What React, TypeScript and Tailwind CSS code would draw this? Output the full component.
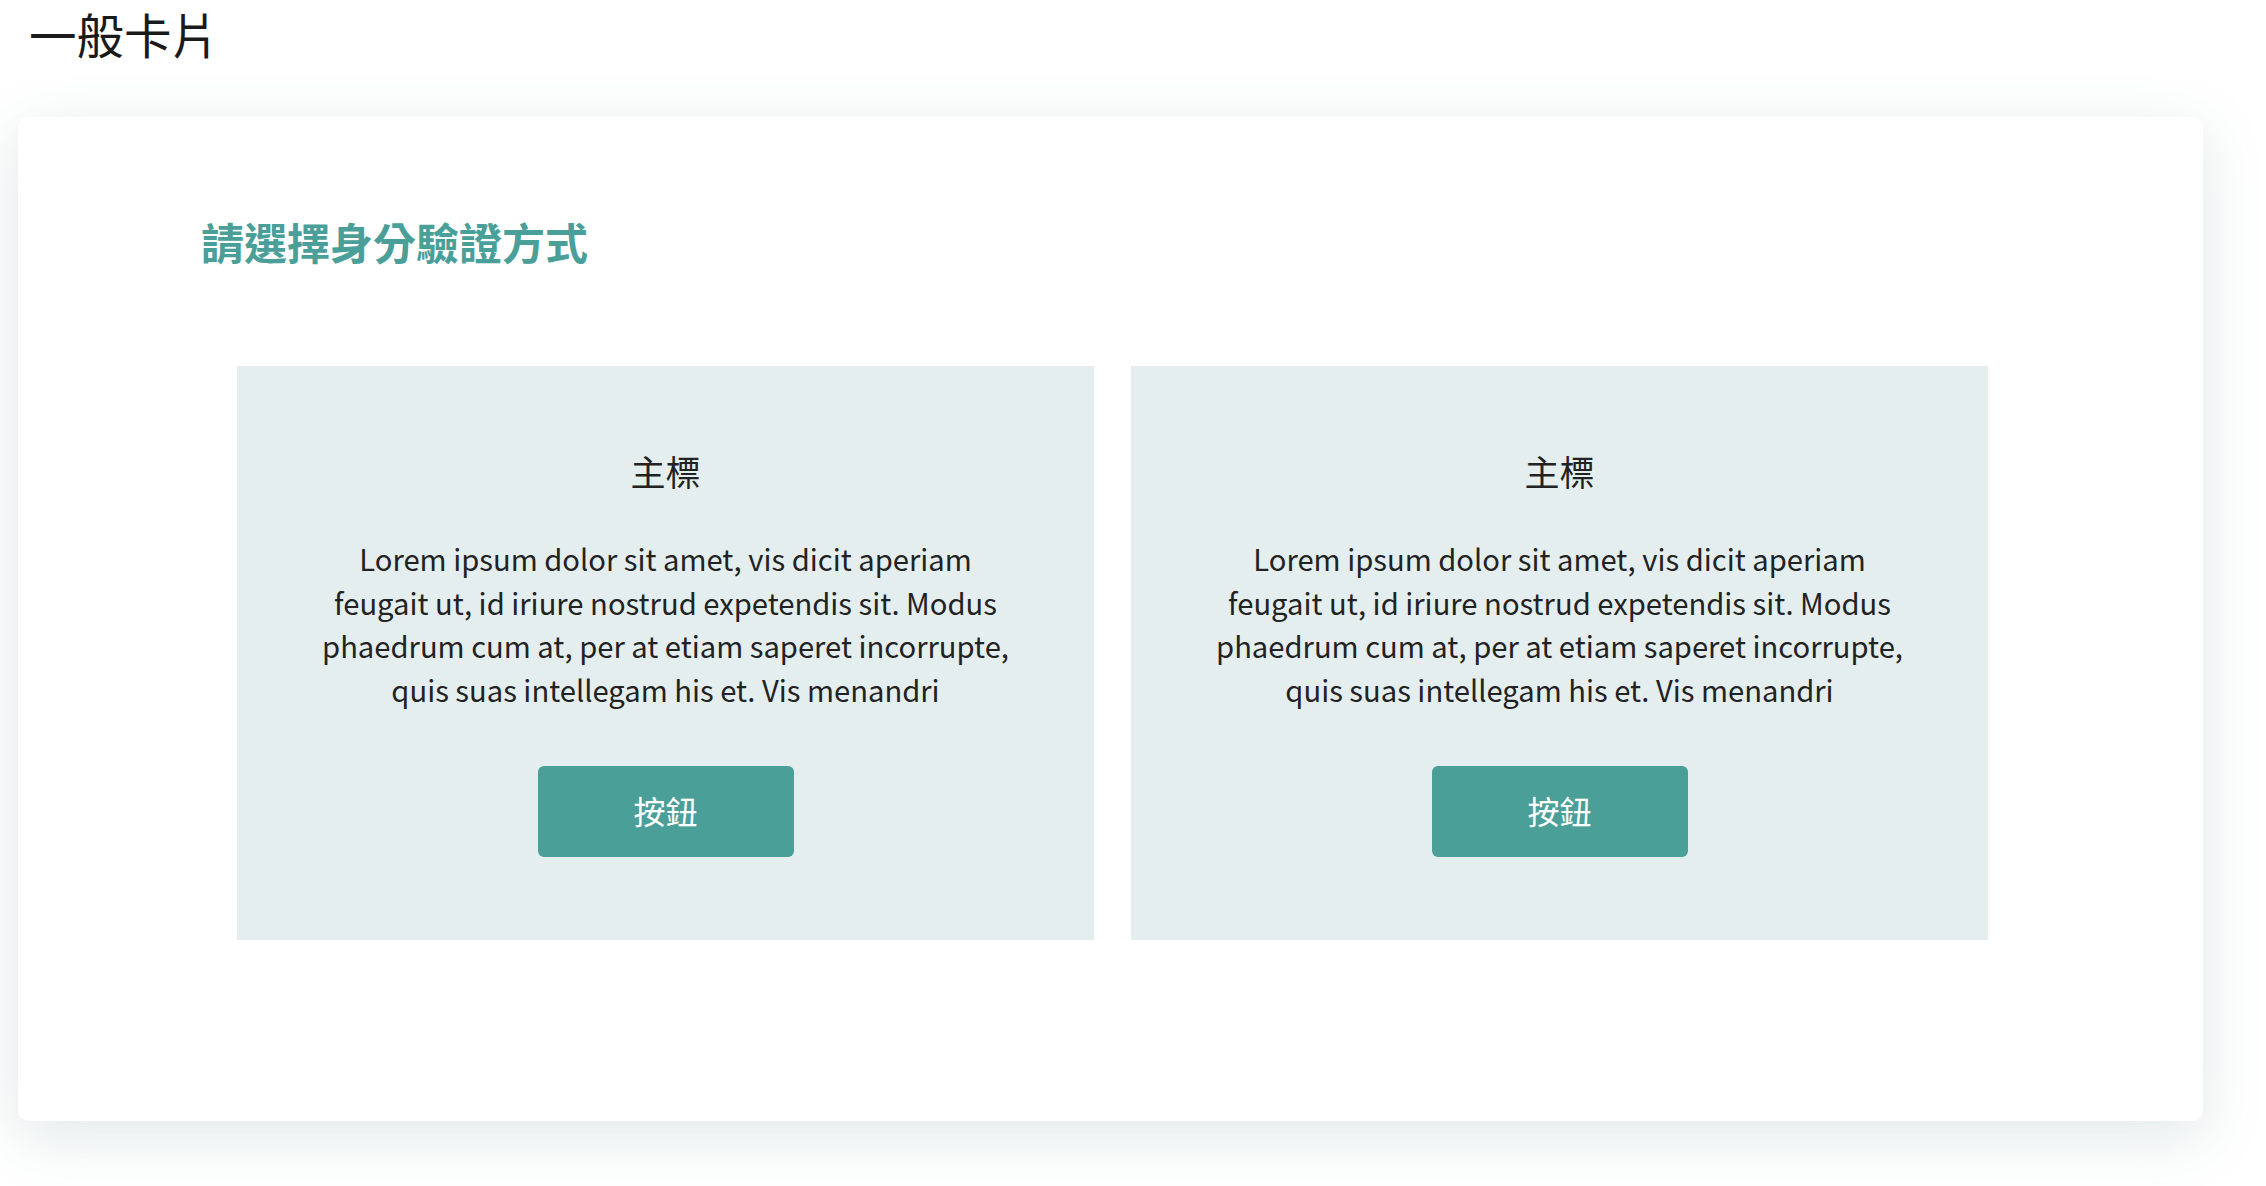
import React from "react";

const FONT = '"Noto Sans CJK TC", "Noto Sans", sans-serif';

const lines = [
  "Lorem ipsum dolor sit amet, vis dicit aperiam",
  "feugait ut, id iriure nostrud expetendis sit. Modus",
  "phaedrum cum at, per at etiam saperet incorrupte,",
  "quis suas intellegam his et. Vis menandri",
];

function OptionCard() {
  return (
    <div className="flex flex-col items-center bg-[#e4eeef] pt-[87px] pb-[83px]">
      <h3 className="text-[35px] leading-[35px] font-normal text-[#222222]">主標</h3>
      <p className="mt-[49px] text-center text-[29.2px] leading-[43.6px] text-[#222222]">
        {lines.map((l, i) => (
          <React.Fragment key={i}>
            {l}
            {i < lines.length - 1 && <br />}
          </React.Fragment>
        ))}
      </p>
      <button className="mt-[55px] flex h-[91px] w-[256px] items-center justify-center rounded-[6px] bg-[#4b9f99] pb-[4px] text-[32px] leading-none text-white">
        按鈕
      </button>
    </div>
  );
}

export default function App() {
  return (
    <div className="min-h-[1186px] bg-white pb-[66px]" style={{ fontFamily: FONT }}>
      <h1 className="ml-[29px] pt-[10px] text-[47.5px] leading-[47px] font-normal text-[#1a1a1a]">一般卡片</h1>
      <div className="ml-[18px] mt-[60px] w-[2185px] rounded-[10px] bg-white pt-[103px] pb-[181px] shadow-[0_15px_60px_rgba(70,120,120,0.17)]">
        <h2 className="ml-[183px] text-[43px] leading-[43px] font-bold text-[#4b9f99]">請選擇身分驗證方式</h2>
        <div className="ml-[219px] mt-[103px] grid w-[1751px] grid-cols-2 gap-[37px]">
          <OptionCard />
          <OptionCard />
        </div>
      </div>
    </div>
  );
}
